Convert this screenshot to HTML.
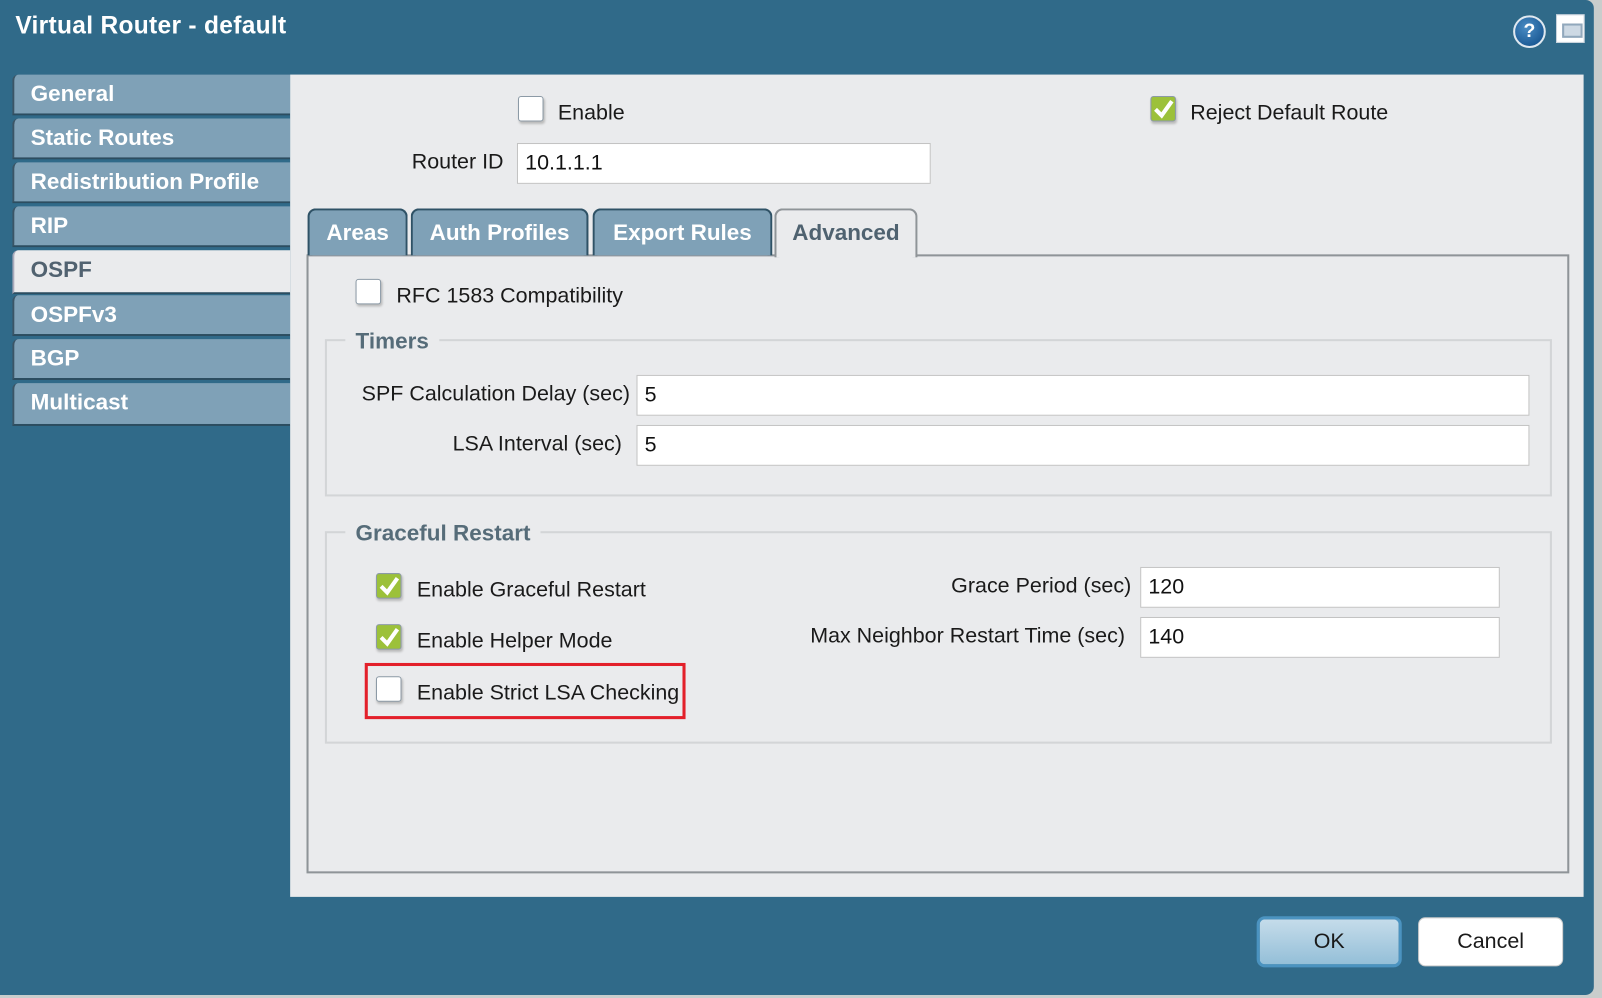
<!DOCTYPE html>
<html><head><meta charset="utf-8"><style>
html,body{margin:0;padding:0;background:#c9cdcc;overflow:hidden;width:1602px;height:998px}
#w{position:absolute;left:0;top:0;width:1568px;height:977px;transform:scale(1.02168,1.0215);transform-origin:0 0;font-family:"Liberation Sans",sans-serif}
.a{position:absolute}
#dlg{left:0;top:0;width:1560px;height:974px;background:#306a89;border-radius:0 8px 8px 0}
.t{font-weight:bold;color:#fff;font-size:22px;letter-spacing:0px}
.lt{left:12px;width:272px;height:40px;background:#7fa1b7;border-radius:6px 0 0 0;border-bottom:2px solid #2c4d60;border-left:2px solid #3b5566;box-sizing:border-box;padding-left:16px;line-height:38px}
.lt.on{background:#eaebed;color:#516270;border-left:2px solid #aab}
.txt{font-size:21px;color:#1a1a1a;white-space:nowrap}
.cb{width:25px;height:25px;border:1px solid #8c9aa6;border-radius:3px;background:#fff;box-shadow:1px 2px 2px #bbb;box-sizing:border-box}
.cb.ck{background:#9cc13a}
.in{background:#fff;border:1px solid #c3c3c3;box-sizing:border-box;font-size:21px;padding-left:7px;line-height:38px;color:#111}
.tb{top:204px;height:46px;background:#7fa1b7;border:2px solid #2f5266;border-bottom:none;border-radius:8px 8px 0 0;box-sizing:border-box;text-align:center;line-height:44px}
.fs{border:2px solid #d3d5d7;box-sizing:border-box}
.lg{font-weight:bold;font-size:22px;color:#566c79;background:#eaebed;padding:0 10px}
</style></head><body><div id="w">
<div id="dlg" class="a"></div>
<div class="a t" style="left:15px;top:12px;font-size:24px;letter-spacing:0.3px">Virtual Router - default</div>
<div class="a" style="left:1481px;top:15px;width:28px;height:28px;border-radius:50%;background:radial-gradient(circle at 40% 35%,#4a8cc4,#0c4a86);border:2px solid #dfe8f0;color:#fff;font-weight:bold;font-size:19px;text-align:center;line-height:28px">?</div>
<div class="a" style="left:1523px;top:14px;width:28px;height:28px;background:#fff;border:1px solid #c8d2dc;box-sizing:border-box"><div class="a" style="left:5px;top:8px;width:16px;height:10px;border:2px solid #91a8bc;background:#cdd9e4"></div></div>

<div class="a lt t" style="top:73px">General</div>
<div class="a lt t" style="top:116px">Static Routes</div>
<div class="a lt t" style="top:159px">Redistribution Profile</div>
<div class="a lt t" style="top:202px">RIP</div>
<div class="a lt t on" style="top:245px;height:43px">OSPF</div>
<div class="a lt t" style="top:289px">OSPFv3</div>
<div class="a lt t" style="top:332px">BGP</div>
<div class="a lt t" style="top:375px;height:42px">Multicast</div>

<div class="a" style="left:284px;top:73px;width:1266px;height:805px;background:#eaebed"></div>

<div class="a cb" style="left:507px;top:94px"></div>
<div class="a txt" style="left:546px;top:99px">Enable</div>
<div class="a cb ck" style="left:1126px;top:94px"><svg width="23" height="23" class="a"><path d="M4 12 L10 18 L20 4" stroke="#fff" stroke-width="4" fill="none"/></svg></div>
<div class="a txt" style="left:1165px;top:99px">Reject Default Route</div>
<div class="a txt" style="left:403px;top:147px">Router ID</div>
<div class="a in" style="left:506px;top:140px;width:405px;height:40px">10.1.1.1</div>

<div class="a" style="left:300px;top:249px;width:1236px;height:606px;border:2px solid #8f9498;box-sizing:border-box"></div>
<div class="a tb t" style="left:301px;width:98px">Areas</div>
<div class="a tb t" style="left:402px;width:174px">Auth Profiles</div>
<div class="a tb t" style="left:580px;width:176px">Export Rules</div>
<div class="a tb t" style="left:758px;width:140px;height:48px;background:#eaebed;color:#4f6270;border-color:#8f9498">Advanced</div>

<div class="a cb" style="left:348px;top:273px"></div>
<div class="a txt" style="left:388px;top:278px">RFC 1583 Compatibility</div>

<div class="a fs" style="left:318px;top:332px;width:1201px;height:154px"></div>
<div class="a lg" style="left:338px;top:321px">Timers</div>
<div class="a txt" style="left:354px;top:374px">SPF Calculation Delay (sec)</div>
<div class="a in" style="left:623px;top:367px;width:874px;height:40px">5</div>
<div class="a txt" style="left:443px;top:423px">LSA Interval (sec)</div>
<div class="a in" style="left:623px;top:416px;width:874px;height:40px">5</div>

<div class="a fs" style="left:318px;top:520px;width:1201px;height:208px"></div>
<div class="a lg" style="left:338px;top:509px">Graceful Restart</div>
<div class="a cb ck" style="left:368px;top:561px"><svg width="23" height="23" class="a"><path d="M4 12 L10 18 L20 4" stroke="#fff" stroke-width="4" fill="none"/></svg></div>
<div class="a txt" style="left:408px;top:566px">Enable Graceful Restart</div>
<div class="a cb ck" style="left:368px;top:611px"><svg width="23" height="23" class="a"><path d="M4 12 L10 18 L20 4" stroke="#fff" stroke-width="4" fill="none"/></svg></div>
<div class="a txt" style="left:408px;top:616px">Enable Helper Mode</div>
<div class="a cb" style="left:368px;top:662px"></div>
<div class="a txt" style="left:408px;top:667px">Enable Strict LSA Checking</div>
<div class="a" style="left:357px;top:649px;width:314px;height:55px;border:3px solid #e3202a;box-sizing:border-box"></div>
<div class="a txt" style="left:931px;top:562px">Grace Period (sec)</div>
<div class="a in" style="left:1116px;top:555px;width:352px;height:40px">120</div>
<div class="a txt" style="left:793px;top:611px">Max Neighbor Restart Time (sec)</div>
<div class="a in" style="left:1116px;top:604px;width:352px;height:40px">140</div>

<div class="a txt" style="left:1230px;top:897px;width:142px;height:50px;box-sizing:border-box;border:3px solid #4b93c0;border-radius:8px;background:linear-gradient(#c5dcea,#94bfd8);text-align:center;line-height:44px">OK</div>
<div class="a txt" style="left:1388px;top:898px;width:142px;height:48px;box-sizing:border-box;border:1px solid #ccc;border-radius:7px;background:#fff;text-align:center;line-height:46px">Cancel</div>
</div></body></html>
